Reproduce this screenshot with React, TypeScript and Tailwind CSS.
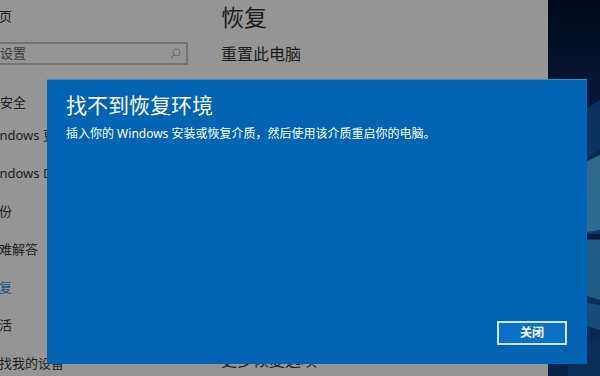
import React from "react";

const cjk = { fontFamily: '"Noto Sans", "Noto Sans CJK SC", sans-serif' };

function SearchIcon() {
  return (
    <svg width="11" height="11" viewBox="0 0 12 12" fill="none" stroke="#6a6a6a" strokeWidth="1.1">
      <circle cx="7.2" cy="4.8" r="3.6" />
      <path d="M4.6 7.4 L1 11" />
    </svg>
  );
}

function Wallpaper() {
  return (
    <svg width="52" height="376" viewBox="0 0 52 376" preserveAspectRatio="none">
      <defs>
        <linearGradient id="bg" x1="0" y1="0" x2="0" y2="1">
          <stop offset="0" stopColor="#020a1c" />
          <stop offset="0.3" stopColor="#05183a" />
          <stop offset="0.6" stopColor="#0b3a6a" />
          <stop offset="1" stopColor="#07224a" />
        </linearGradient>
      </defs>
      <rect width="52" height="376" fill="url(#bg)" />
      <polygon points="20,120 52,100 52,150 20,170" fill="#0e3a6e" opacity="0.7" />
      <polygon points="20,170 52,155 52,230 20,235" fill="#3a7da0" opacity="0.75" />
      <polygon points="20,240 52,240 52,300 20,290" fill="#2a6f98" opacity="0.7" />
      <polygon points="20,300 52,305 52,330 20,320" fill="#1a5586" opacity="0.8" />
      <rect x="0" y="234" width="52" height="5" fill="#041834" opacity="0.9" />
      <polygon points="20,335 52,340 52,376 20,376" fill="#0a2c58" />
    </svg>
  );
}

export default function App() {
  const items = [
    "Windows 更新",
    "Windows Defender",
    "备份",
    "疑难解答",
    "恢复",
    "激活",
    "查找我的设备",
  ];
  return (
    <div className="relative w-[600px] h-[376px] overflow-hidden flex bg-[#020a1c]" style={cjk}>
      <div className="w-[548px] h-full shrink-0 bg-[#959595] flex overflow-hidden text-[#1c1c1c]">
        <div className="w-[240px] -ml-[40px] shrink-0 flex flex-col">
          <div className="h-[20px] mt-[7px] pl-[26px] flex items-center text-[13px] whitespace-nowrap">主页</div>
          <div className="mt-[15px] ml-[5px] w-[223px] h-[25px] border-2 border-[#727272] flex items-center justify-between pl-[7px] pr-[5px] text-[13px] text-[#3a3a3a]">
            <span>查找设置</span>
            <SearchIcon />
          </div>
          <div className="h-[20px] mt-[28px] pl-[1px] flex items-center text-[13px] whitespace-nowrap">更新和安全</div>
          <div className="mt-[4px] flex flex-col">
            {items.map((t) => (
              <div
                key={t}
                className={
                  "h-[38px] flex items-center text-[13px] whitespace-nowrap " +
                  (t.startsWith("Windows") ? "pl-[24px] " : "pl-[26px] ") +
                  (t === "恢复" ? "text-[#254f80]" : "")
                }
              >
                {t}
              </div>
            ))}
          </div>
        </div>
        <div className="pl-[21px] flex flex-col">
          <div className="mt-[3px] h-[28px] flex items-center text-[23px] leading-none whitespace-nowrap">恢复</div>
          <div className="mt-[12px] h-[22px] flex items-center text-[16px] whitespace-nowrap">重置此电脑</div>
          <div className="mt-[284px] h-[22px] flex items-center text-[16px] whitespace-nowrap">更多恢复选项</div>
        </div>
      </div>
      <div className="flex-1 h-full">
        <Wallpaper />
      </div>

      <div className="absolute left-[47px] top-[79px] w-[540px] h-[285px] bg-[#0064b2] border-t border-[#3d8ccc] flex flex-col pl-[19px] pr-[20px] pb-[19px] text-white">
        <div className="mt-[12px] h-[28px] flex items-center text-[21px] whitespace-nowrap">找不到恢复环境</div>
        <div className="mt-[5px] h-[18px] flex items-center text-[12px] whitespace-nowrap">
          插入你的 Windows 安装或恢复介质，然后使用该介质重启你的电脑。
        </div>
        <div className="flex-1" />
        <div className="flex justify-end">
          <div className="w-[70px] h-[24px] border-2 border-[#cfe4f4] bg-[#0a72c6] flex items-center justify-center text-[12px] font-bold">
            关闭
          </div>
        </div>
      </div>
    </div>
  );
}
